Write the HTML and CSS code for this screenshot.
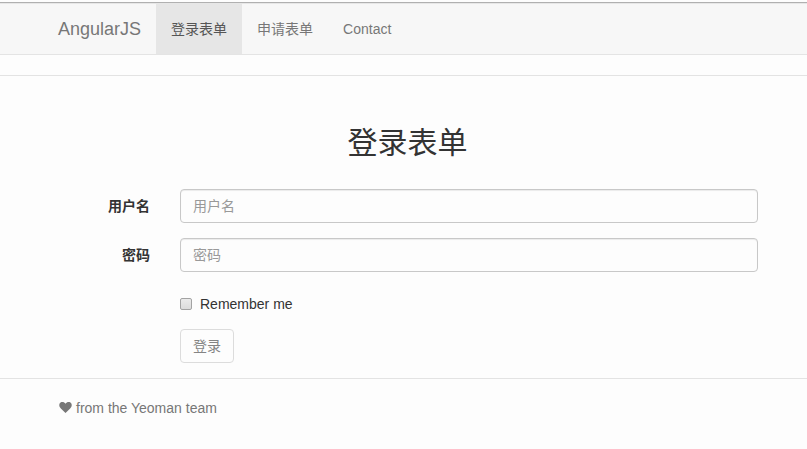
FILE: index.html
```html
<!DOCTYPE html>
<html lang="zh-CN">
<head>
<meta charset="utf-8">
<title>AngularJS</title>
<link rel="stylesheet" href="styles.css">
</head>
<body>
<header class="navbar">
  <a class="brand">AngularJS</a>
  <nav class="nav">
    <a class="nav-link active">登录表单</a>
    <a class="nav-link">申请表单</a>
    <a class="nav-link">Contact</a>
  </nav>
</header>
<main class="content">
  <h2 class="title">登录表单</h2>
  <form class="form">
    <label class="label" for="user">用户名</label>
    <input class="control" id="user" type="text" placeholder="用户名">
    <label class="label" for="pass">密码</label>
    <input class="control" id="pass" type="password" placeholder="密码">
    <label class="remember"><input class="check" type="checkbox"><span>Remember me</span></label>
    <button class="submit" type="button">登录</button>
  </form>
</main>
<footer class="footer">
  <svg class="heart" viewBox="0 0 14 13"><path d="M7 12.4L2 7.500C.3 5.900 0 4.200.5 2.700C1.500-.1 5.400-.1 7 2.500C8.600-.1 12.500-.1 13.500 2.700C14 4.200 13.700 5.900 12 7.500Z"/></svg>
  <span>from the Yeoman team</span>
</footer>
</body>
</html>
```
FILE: styles.css
```css
* { box-sizing: border-box; }
body {
  margin: 0;
  background: #fdfdfd;
  color: #333;
  font: 14px/20px "Liberation Sans", "Noto Sans CJK SC", sans-serif;
}
.navbar {
  display: flex;
  height: 53px;
  margin-top: 2px;
  padding-left: 43px;
  background: #f7f7f7;
  border-top: 1px solid #b0b0b0;
  border-bottom: 1px solid #e4e4e4;
  box-shadow: inset 0 1px #e7e7e7;
}
.brand { padding: 16px 15px; font-size: 18px; color: #777; }
.nav { display: flex; }
.nav-link { padding: 16px 15px; color: #777; }
.nav-link.active { background: #e6e6e6; color: #555; }
.content {
  margin-top: 20px;
  height: 304px;
  padding: 50px 49px 0 57px;
  border-top: 1px solid #e3e3e3;
  border-bottom: 1px solid #e3e3e3;
}
.title {
  margin: 0 0 30px;
  font-size: 30px;
  line-height: 33px;
  font-weight: 400;
  text-align: center;
}
.form {
  display: grid;
  grid-template-columns: 93px 578px;
  column-gap: 30px;
  row-gap: 15px;
}
.label { padding-top: 7px; text-align: right; font-weight: 700; }
.control {
  width: 100%;
  height: 34px;
  padding: 6px 12px;
  border: 1px solid #c8c8c8;
  border-radius: 4px;
  background: #fdfdfd;
  font: inherit;
  box-shadow: inset 0 1px 1px rgba(0, 0, 0, .075);
}
.control::placeholder { color: #999; }
.remember {
  grid-column: 2;
  display: flex;
  align-items: center;
  height: 20px;
  margin-top: 7px;
}
.check {
  appearance: none;
  width: 12px;
  height: 12px;
  margin: 0 8px 0 0;
  border: 1px solid #a3a3a3;
  border-radius: 2px;
  background: linear-gradient(#ebebeb, #dcdcdc);
}
.submit {
  grid-column: 2;
  justify-self: start;
  height: 34px;
  padding: 6px 12px;
  border: 1px solid #dcdcdc;
  border-radius: 4px;
  background: #fdfdfd;
  color: #848484;
  font: inherit;
}
.footer {
  display: flex;
  align-items: center;
  height: 20px;
  margin-top: 19px;
  padding-left: 59px;
  gap: 4px;
  color: #777;
}
.heart { width: 13px; height: 13px; margin-top: -2px; fill: #777; }
```
